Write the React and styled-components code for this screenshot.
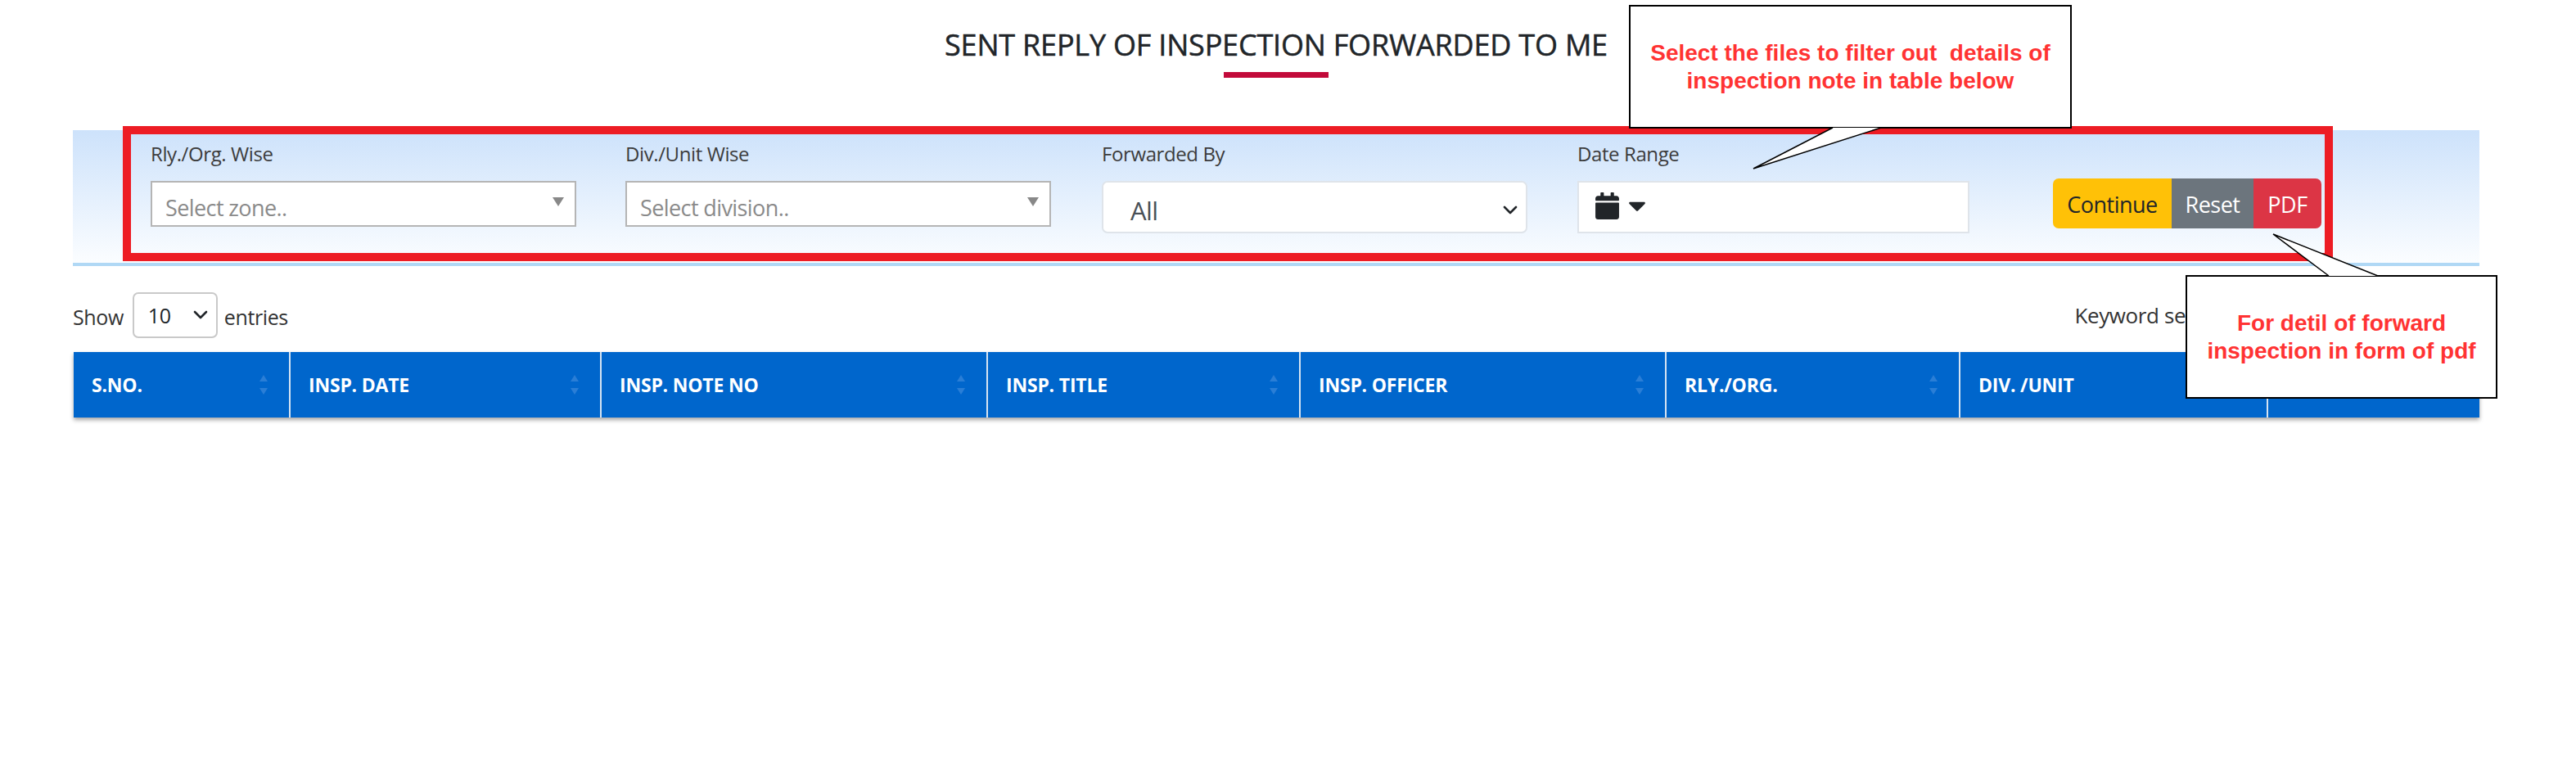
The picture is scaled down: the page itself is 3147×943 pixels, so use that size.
import React from 'react';
import styled, { createGlobalStyle } from 'styled-components';
import { FaCalendar, FaCaretDown } from 'react-icons/fa';

const GlobalStyle = createGlobalStyle`
    body {
        margin: 0;
        background: #fff;
        font-family: "Open Sans", "Noto Sans", sans-serif;
        color: #212529;
    }
`

const Page = styled.div`
    position: relative;
    height: 943px;
    padding: 32px 118px 0 89px;
    box-sizing: border-box;
    overflow: hidden;
`

const Title = styled.h1`
    margin: 0;
    text-align: center;
    font-size: 36px;
    line-height: 46px;
    font-weight: 400;
    letter-spacing: -0.2px;
    -webkit-text-stroke: 0.5px #212529;
`

const TitleRule = styled.div`
    width: 128px;
    height: 7px;
    margin: 10px auto 0;
    background: #c20a3a;
`

const FilterPanel = styled.div`
    display: flex;
    height: 166px;
    margin-top: 64px;
    padding: 14px 193px 0 95px;
    box-sizing: border-box;
    border-bottom: 4px solid #b0d8f5;
    background: linear-gradient(180deg, #cde2fb 0%, #fbfdff 100%);
`

const Field = styled.div`
    width: ${p => p.$width}px;
    margin-right: ${p => p.$gap}px;
    flex-shrink: 0;
`

const FieldLabel = styled.div`
    height: 30px;
    margin-bottom: 18px;
    font-size: 24px;
    line-height: 30px;
    letter-spacing: -0.4px;
    color: #3c3c3c;
`

const ComboBox = styled.div`
    display: flex;
    align-items: center;
    justify-content: space-between;
    height: 56px;
    margin-top: 2px;
    padding: 8px 13px 0 16px;
    box-sizing: border-box;
    border: 2px solid #b5b5b5;
    background: #fff;
    font-size: 27px;
    letter-spacing: -0.6px;
    color: #8a8a8a;
`

const ComboArrow = styled.span`
    width: 0;
    height: 0;
    margin-top: -14px;
    border-left: 7px solid transparent;
    border-right: 7px solid transparent;
    border-top: 11px solid #888;
`

const SelectBox = styled.div`
    display: flex;
    align-items: center;
    justify-content: space-between;
    height: 64px;
    padding: 8px 10px 0 33px;
    box-sizing: border-box;
    border: 2px solid #dfe4ea;
    border-radius: 7px;
    background: #fff;
    font-size: 31px;
    letter-spacing: -0.6px;
    color: #495057;
`

const DateBox = styled.div`
    display: flex;
    align-items: center;
    gap: 3px;
    height: 64px;
    padding: 0 0 4px 18px;
    box-sizing: border-box;
    border: 2px solid #dfe4ea;
    background: #fff;
    color: #212529;
`

const ButtonGroup = styled.div`
    display: flex;
    height: 61px;
    margin: 45px 0 0 auto;
    border-radius: 7px;
    overflow: hidden;
`

const GroupButton = styled.button`
    width: ${p => p.$width}px;
    padding: 2px 0 0;
    border: 0;
    background: ${p => p.$bg};
    color: ${p => p.$color};
    font-family: inherit;
    font-size: 27px;
    letter-spacing: -0.5px;
`

const EntriesRow = styled.div`
    display: flex;
    align-items: center;
    height: 56px;
    margin: 32px 0 17px;
    font-size: 25px;
    letter-spacing: -0.4px;
    color: #333;
`

const EntriesLabel = styled.span`
    margin-right: ${p => p.$right || 0}px;
    padding-top: 3px;
`

const EntriesSelect = styled.div`
    display: flex;
    align-items: center;
    justify-content: space-between;
    width: 104px;
    height: 56px;
    margin-right: 8px;
    padding: 0 10px 0 17px;
    box-sizing: border-box;
    border: 2px solid #c9c9c9;
    border-radius: 7px;
    color: #212529;
`

const KeywordLabel = styled.span`
    margin-left: auto;
    margin-right: 307px;
    font-size: 26px;
`

const HeaderTable = styled.table`
    width: 2939px;
    margin-left: 1px;
    border-collapse: collapse;
    table-layout: fixed;
    box-shadow: 0 3px 5px rgba(0, 0, 0, 0.35);
`

const HeaderCell = styled.th`
    width: ${p => p.$width}px;
    height: 80px;
    padding: 0 23px 0 22px;
    box-sizing: border-box;
    border-right: 2px solid #d5e3f2;
    background: #0066cc;
    color: #fff;
    font-size: 23px;
    font-weight: 700;
    text-align: left;
    letter-spacing: -0.2px;

    &:last-child {
        border-right: 0;
    }
`

const HeaderInner = styled.div`
    display: flex;
    align-items: center;
    justify-content: space-between;
`

const SortArrows = styled.span`
    display: flex;
    flex-direction: column;
    gap: 8px;
    margin-right: 3px;

    &::before,
    &::after {
        content: '';
        width: 0;
        height: 0;
        border-left: 5px solid transparent;
        border-right: 5px solid transparent;
    }

    &::before {
        border-bottom: 8px solid #2a7ed6;
    }

    &::after {
        border-top: 8px solid #2a7ed6;
    }
`

// annotation layer drawn over the page
const RedFrame = styled.div`
    position: absolute;
    left: 150px;
    top: 154px;
    width: 2700px;
    height: 165px;
    box-sizing: border-box;
    border: 10px solid #ed1c24;
`

const Callout = styled.div`
    position: absolute;
    left: ${p => p.$left}px;
    top: ${p => p.$top}px;
    width: ${p => p.$width}px;
    height: 151px;
    display: flex;
    align-items: center;
    justify-content: center;
    box-sizing: border-box;
    border: 2px solid #000;
    background: #fff;
    color: #ff3333;
    font-family: "Liberation Sans", Arial, sans-serif;
    font-size: 28px;
    font-weight: 700;
    line-height: 34px;
    text-align: center;
    white-space: pre;
`

const CalloutTail = styled.svg`
    position: absolute;
    left: 0;
    top: 0;
    overflow: visible;
`

const Chevron = () => (
    <svg width="18" height="12" viewBox="0 0 18 12" fill="none" stroke="#212529" strokeWidth="2.6" strokeLinecap="round" strokeLinejoin="round">
        <path d="M2 2l7 7 7-7" />
    </svg>
)

const columns = [
    { label: 'S.NO.', width: 264 },
    { label: 'INSP. DATE', width: 380 },
    { label: 'INSP. NOTE NO', width: 472 },
    { label: 'INSP. TITLE', width: 382 },
    { label: 'INSP. OFFICER', width: 447 },
    { label: 'RLY./ORG.', width: 359 },
    { label: 'DIV. /UNIT', width: 376 },
    { label: 'ACTION', width: 259 },
]

const App = () => (
    <Page>
        <GlobalStyle />
        <Title>SENT REPLY OF INSPECTION FORWARDED TO ME</Title>
        <TitleRule />
        <FilterPanel>
            <Field $width={520} $gap={60}>
                <FieldLabel>Rly./Org. Wise</FieldLabel>
                <ComboBox>Select zone..<ComboArrow /></ComboBox>
            </Field>
            <Field $width={520} $gap={62}>
                <FieldLabel>Div./Unit Wise</FieldLabel>
                <ComboBox>Select division..<ComboArrow /></ComboBox>
            </Field>
            <Field $width={520} $gap={61}>
                <FieldLabel>Forwarded By</FieldLabel>
                <SelectBox>All<Chevron /></SelectBox>
            </Field>
            <Field $width={479} $gap={0}>
                <FieldLabel>Date Range</FieldLabel>
                <DateBox>
                    <FaCalendar size={33} />
                    <FaCaretDown size={34} />
                </DateBox>
            </Field>
            <ButtonGroup>
                <GroupButton $width={145} $bg="#ffc107" $color="#212529">Continue</GroupButton>
                <GroupButton $width={100} $bg="#6c757d" $color="#fff">Reset</GroupButton>
                <GroupButton $width={83} $bg="#dc3545" $color="#fff">PDF</GroupButton>
            </ButtonGroup>
        </FilterPanel>
        <EntriesRow>
            <EntriesLabel $right={11}>Show</EntriesLabel>
            <EntriesSelect>10<Chevron /></EntriesSelect>
            <EntriesLabel>entries</EntriesLabel>
            <KeywordLabel>Keyword search</KeywordLabel>
        </EntriesRow>
        <HeaderTable>
            <thead>
                <tr>
                    {columns.map(col => (
                        <HeaderCell key={col.label} $width={col.width}>
                            <HeaderInner>
                                {col.label}
                                <SortArrows />
                            </HeaderInner>
                        </HeaderCell>
                    ))}
                </tr>
            </thead>
        </HeaderTable>
        <RedFrame />
        <Callout $left={1990} $top={6} $width={541}>
            {'Select the files to filter out  details of\ninspection note in table below'}
        </Callout>
        <CalloutTail width="1" height="1">
            <path d="M2239 156L2142 206L2298 156" fill="#fff" stroke="#000" strokeWidth="1.5" />
        </CalloutTail>
        <Callout $left={2670} $top={336} $width={381}>
            {'For detil of forward\ninspection in form of pdf'}
        </Callout>
        <CalloutTail width="1" height="1">
            <path d="M2845 337L2777 286L2905 337" fill="#fff" stroke="#000" strokeWidth="1.5" />
        </CalloutTail>
    </Page>
);

export default App;
